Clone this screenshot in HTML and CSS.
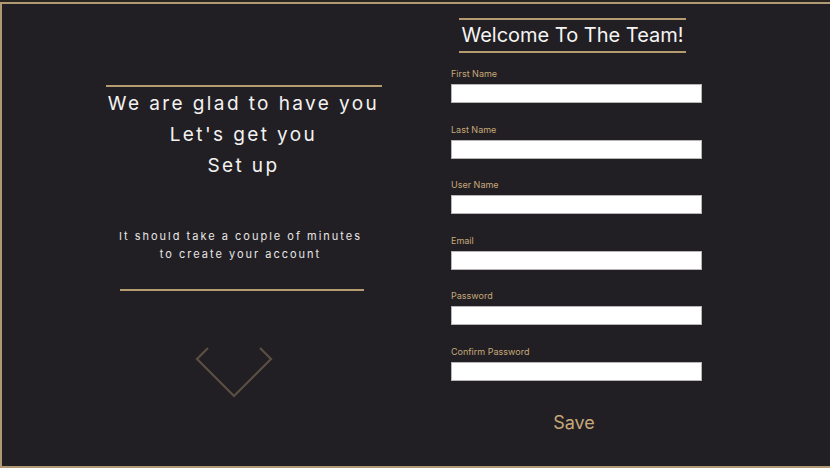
FILE: index.html
```html
<!DOCTYPE html>
<html lang="en">
<head>
<meta charset="utf-8">
<title>Welcome To The Team!</title>
<link rel="stylesheet" href="styles.css">
</head>
<body>
<main class="frame">
  <section class="intro">
    <div class="rule rule-top"></div>
    <h1 class="intro-title">We are glad to have you<br>Let's get you<br>Set up</h1>
    <p class="intro-text">It should take a couple of minutes<br>to create your account</p>
    <div class="rule rule-bottom"></div>
    <svg class="chevron" width="80" height="52" viewBox="0 0 80 52" aria-hidden="true">
      <path d="M13 1 L2 12 L39 49 L76 12 L65 1" fill="none" stroke="#5a4f40" stroke-width="2.2"/>
    </svg>
  </section>
  <section class="signup">
    <h2 class="signup-title">Welcome To The Team!</h2>
    <form class="form">
      <label class="field"><span class="label">First Name</span><input class="input" type="text"></label>
      <label class="field"><span class="label">Last Name</span><input class="input" type="text"></label>
      <label class="field"><span class="label">User Name</span><input class="input" type="text"></label>
      <label class="field"><span class="label">Email</span><input class="input" type="email"></label>
      <label class="field"><span class="label">Password</span><input class="input" type="password"></label>
      <label class="field"><span class="label">Confirm Password</span><input class="input" type="password"></label>
      <button class="save" type="button">Save</button>
    </form>
  </section>
</main>
</body>
</html>
```
FILE: styles.css
```css
html {
  background: #2a2420;
}
body {
  margin: 0;
  padding-top: 2px;
  height: 468px;
  box-sizing: border-box;
  overflow: hidden;
  font-family: "Inter", "Noto Sans", sans-serif;
  color: #f2f0ee;
}
.frame {
  height: 466px;
  box-sizing: border-box;
  background: #211f24;
  border: 2px solid #b09a74;
  border-right: none;
  display: grid;
  grid-template-columns: 449px 251px;
  align-items: start;
}
.intro {
  padding: 81px 0 0 34px;
  display: flex;
  flex-direction: column;
  align-items: center;
}
.rule {
  height: 2px;
  background: #b59c70;
}
.rule-top {
  width: 276px;
}
.intro-title {
  margin: 1px 0 0;
  font-size: 19px;
  font-weight: 400;
  line-height: 31px;
  letter-spacing: 2.4px;
  text-align: center;
  color: #f4f2f0;
}
.intro-text {
  margin: 47px 0 0 -6px;
  font-size: 11px;
  line-height: 17.5px;
  letter-spacing: 2px;
  text-align: center;
  color: #e8e6e4;
}
.rule-bottom {
  width: 244px;
  margin-top: 26px;
  margin-left: -3px;
}
.chevron {
  display: block;
  margin-top: 56px;
  margin-left: -18px;
}
.signup {
  padding-top: 14px;
  display: flex;
  flex-direction: column;
}
.signup-title {
  align-self: flex-start;
  margin: 0 0 15px 8px;
  padding: 0 0;
  width: 227px;
  border-top: 2px solid #b59c70;
  border-bottom: 2px solid #b59c70;
  font-size: 20px;
  font-weight: 400;
  line-height: 31px;
  text-align: center;
  white-space: nowrap;
  color: #f6f4f2;
}
.form {
  display: flex;
  flex-direction: column;
}
.field {
  display: flex;
  flex-direction: column;
  gap: 4px;
  margin-bottom: 20.5px;
}
.label {
  font-size: 9px;
  line-height: 12px;
  color: #c6a878;
}
.input {
  display: block;
  box-sizing: border-box;
  width: 251px;
  height: 19px;
  margin: 0;
  padding: 0 4px;
  border: 1px solid #b8b6b4;
  background: #ffffff;
  font-family: inherit;
}
.save {
  align-self: center;
  margin: 10px 0 0 -5px;
  padding: 0;
  border: none;
  background: none;
  font-family: inherit;
  font-size: 18px;
  line-height: 24px;
  color: #c6a878;
}
```
